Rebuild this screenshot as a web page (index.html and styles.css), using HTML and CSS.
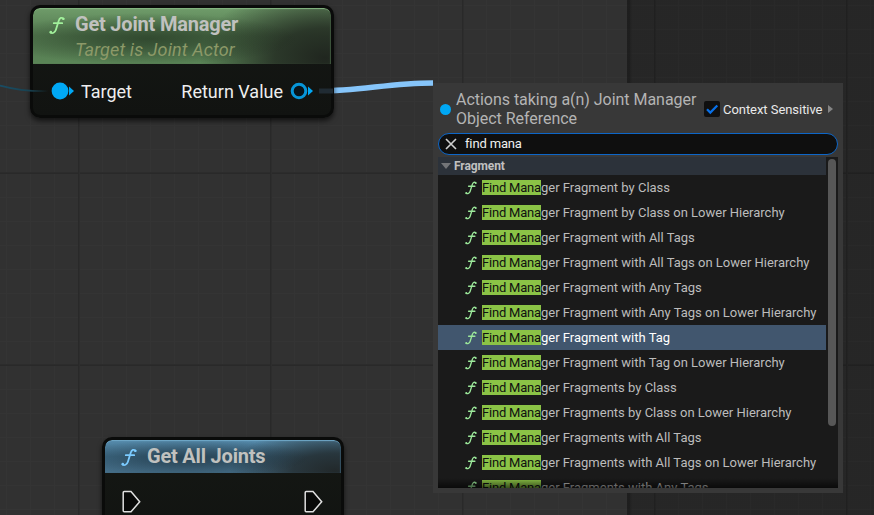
FILE: index.html
```html
<!DOCTYPE html>
<html lang="en">
<head>
<meta charset="utf-8">
<title>Blueprint Graph</title>
<link rel="stylesheet" href="styles.css">
</head>
<body>
<svg class="defs" width="0" height="0" aria-hidden="true">
  <symbol id="fn" viewBox="0 0 16 18">
    <path d="M14.6 2.200C12.800.5 10.700 1.200 9.700 4.300L6.900 13.300C6 16.300 3.300 17.300 1.400 16M4.800 6.700H13.200" fill="none" stroke="currentColor" stroke-width="1.800" stroke-linecap="round"/>
    <circle cx="14.3" cy="2.4" r="1.2" fill="currentColor"/><circle cx="1.8" cy="15.6" r="1.3" fill="currentColor"/>
  </symbol>
  <symbol id="exec" viewBox="0 0 20 23">
    <path d="M2.2 1.5H9L17.7 11.7 9 21.800H2.2Q1.2 21.800 1.2 20.800V2.5Q1.2 1.5 2.2 1.5Z" fill="#080908" stroke="#e0e0e0" stroke-width="1.5"/>
  </symbol>
</svg>
<main class="graph">
  <div class="outside"></div>
  <svg class="wires" width="874" height="515">
    <defs><linearGradient id="fade" gradientUnits="userSpaceOnUse" x1="0" y1="0" x2="48" y2="0"><stop offset="0" stop-color="#184d65"/><stop offset=".6" stop-color="#184353"/><stop offset="1" stop-color="#184353" stop-opacity="0"/></linearGradient></defs>
    <path d="M319 91C360 91 390 83 433 83" fill="none" stroke="#86c5fa" stroke-width="5.500"/>
  </svg>

  <section class="node manager">
    <header class="head green">
      <svg class="fn"><use href="#fn"/></svg>
      <div><h2 class="title">Get Joint Manager</h2><p class="sub">Target is Joint Actor</p></div>
    </header>
    <div class="pins">
      <div class="pin"><svg width="24" height="18" viewBox="0 0 24 18"><circle cx="10" cy="9" r="8.4" fill="#00a8f5"/><path d="M19 4.500L24 9 19 13.500Z" fill="#00a8f5"/></svg><span>Target</span></div>
      <div class="pin"><span>Return Value</span><svg width="24" height="18" viewBox="0 0 24 18"><circle cx="9" cy="9" r="6.8" fill="#08141b" stroke="#0795d8" stroke-width="3"/><path d="M18 4.500L23 9 18 13.500Z" fill="#00a8f5"/></svg></div>
    </div>
  </section>

  <section class="node joints">
    <header class="head blue"><svg class="fn"><use href="#fn"/></svg><h2 class="title">Get All Joints</h2></header>
    <div class="execs"><svg width="20" height="23"><use href="#exec"/></svg><svg width="20" height="23"><use href="#exec"/></svg></div>
  </section>
  <svg class="wires" width="874" height="515">
    <path d="M0 85.5Q22 91.500 48 91" fill="none" stroke="url(#fade)" stroke-width="1.8"/>
    <path d="M319 91H333" stroke="#202b33" stroke-width="5"/>
  </svg>

  <section class="menu">
    <header class="menu-head">
      <i class="dot"></i>
      <h3 class="context">Actions taking a(n) Joint Manager<br>Object Reference</h3>
      <div class="check"><svg width="16" height="16" viewBox="0 0 16 16"><path d="M3 8.200L6.300 11.500 13.300 4.500" fill="none" stroke="#0870e8" stroke-width="2.300"/></svg></div>
      <span class="sensitive">Context Sensitive</span><i class="more"></i>
    </header>
    <div class="search"><svg width="12" height="12" viewBox="0 0 12 12"><path d="M1 1L11 11M11 1L1 11" stroke="#d0d0d0" stroke-width="1.600"/></svg><span>find mana</span></div>
    <div class="list">
      <div class="group"><i></i><span>Fragment</span></div>
      <div class="row"><svg><use href="#fn"/></svg><span><mark>Find Mana</mark>ger Fragment by Class</span></div>
      <div class="row"><svg><use href="#fn"/></svg><span><mark>Find Mana</mark>ger Fragment by Class on Lower Hierarchy</span></div>
      <div class="row"><svg><use href="#fn"/></svg><span><mark>Find Mana</mark>ger Fragment with All Tags</span></div>
      <div class="row"><svg><use href="#fn"/></svg><span><mark>Find Mana</mark>ger Fragment with All Tags on Lower Hierarchy</span></div>
      <div class="row"><svg><use href="#fn"/></svg><span><mark>Find Mana</mark>ger Fragment with Any Tags</span></div>
      <div class="row"><svg><use href="#fn"/></svg><span><mark>Find Mana</mark>ger Fragment with Any Tags on Lower Hierarchy</span></div>
      <div class="row selected"><svg><use href="#fn"/></svg><span><mark>Find Mana</mark>ger Fragment with Tag</span></div>
      <div class="row"><svg><use href="#fn"/></svg><span><mark>Find Mana</mark>ger Fragment with Tag on Lower Hierarchy</span></div>
      <div class="row"><svg><use href="#fn"/></svg><span><mark>Find Mana</mark>ger Fragments by Class</span></div>
      <div class="row"><svg><use href="#fn"/></svg><span><mark>Find Mana</mark>ger Fragments by Class on Lower Hierarchy</span></div>
      <div class="row"><svg><use href="#fn"/></svg><span><mark>Find Mana</mark>ger Fragments with All Tags</span></div>
      <div class="row"><svg><use href="#fn"/></svg><span><mark>Find Mana</mark>ger Fragments with All Tags on Lower Hierarchy</span></div>
      <div class="row"><svg><use href="#fn"/></svg><span><mark>Find Mana</mark>ger Fragments with Any Tags</span></div>
      <div class="thumb"></div>
      <div class="shade"></div>
    </div>
  </section>
</main>
</body>
</html>
```
FILE: styles.css
```css
* { box-sizing: border-box; }
body { margin: 0; font-family: Roboto, "Liberation Sans", sans-serif; overflow: hidden; }
h2, h3, p { margin: 0; }
.defs { position: absolute; }
.graph {
  position: relative; width: 874px; height: 515px; overflow: hidden;
  background:
    repeating-linear-gradient(90deg, #292929 0 1px, #2d2d2d 1px 2px, transparent 2px 192px) 78px 0 / 192px 100%,
    repeating-linear-gradient(#2c2c2c 0 1px, #292929 1px 2px, transparent 2px 192px) 0 172px / 100% 192px,
    linear-gradient(90deg, #343434 1px, transparent 1px) 6px 0 / 24px 24px,
    linear-gradient(#343434 1px, transparent 1px) 0 5px / 24px 24px,
    #313131;
}
.outside { position: absolute; left: 627px; top: 0; width: 247px; height: 515px; background: linear-gradient(90deg, rgba(0,0,0,.38) 0 3px, rgba(0,0,0,.22) 5px); }
.wires { position: absolute; left: 0; top: 0; }

.node { position: absolute; border: 3px solid #0a0b0a; border-radius: 10px; background: linear-gradient(#151814, #111311); box-shadow: 0 3px 5px rgba(0,0,0,.6); overflow: hidden; }
.manager { left: 30px; top: 5px; width: 304px; height: 113px; }
.joints { left: 102px; top: 437px; width: 242px; height: 110px; }
.head { display: flex; border-radius: 7px 7px 0 0; }
.green {
  height: 56px; padding: 4px 0 0 16px; gap: 10px; color: #a1f09b;
  background: radial-gradient(ellipse 150px 26px at 115px 31px, rgba(22,34,22,.55), rgba(22,34,22,.4) 35%, transparent), radial-gradient(ellipse 125px 75px at 292px 50px, #20261f, rgba(32,38,31,.8) 40%, transparent), linear-gradient(#6f9c6a, #52784e 50%, #5b8557);
  box-shadow: inset 0 2px 1px -1px #87b783, inset -1px 0 1px #3f573d;
}
.blue {
  height: 33px; padding: 4px 0 0 16px; gap: 10px; color: #7bcbff;
  background: radial-gradient(ellipse 120px 19px at 85px 18px, rgba(18,28,36,.5), rgba(18,28,36,.35) 40%, transparent), radial-gradient(ellipse 105px 45px at 230px 31px, #22292b, rgba(34,41,43,.8) 40%, transparent), linear-gradient(#568bac, #3f6c87 50%, #466f89);
  box-shadow: inset 0 2px 1px -1px #71a9c9, inset -1px 0 1px #365364;
}
.fn { width: 16px; height: 19px; margin-top: 4px; flex: none; }
.title { color: #c0c1bf; font-size: 20px; line-height: 24px; font-weight: 700; letter-spacing: -.2px; white-space: nowrap; }
.sub { color: #8c9968; font-size: 18px; line-height: 25px; font-style: italic; letter-spacing: .13px; white-space: nowrap; margin-top: 1px; }
.pins { display: flex; justify-content: space-between; padding: 15px 17px 0 17px; }
.pin { display: flex; align-items: center; height: 24px; gap: 7px; color: #eee; font-size: 18px; white-space: nowrap; }
.pin svg { flex: none; }
.execs { display: flex; justify-content: space-between; padding: 17px 17px 0 17px; }

.menu { position: absolute; left: 433px; top: 83px; width: 410px; height: 410px; padding: 5px; background: #383838; display: flex; flex-direction: column; }
.menu-head { display: flex; align-items: flex-start; height: 45px; padding: 0 5px 0 2px; flex: none; }
.dot { width: 11px; height: 11px; border-radius: 50%; background: #00a8f5; margin-top: 16px; }
.context { width: 253px; padding: 2px 0 0 5px; font-size: 16px; font-weight: 400; line-height: 19px; letter-spacing: -.03px; color: #b4b4b4; white-space: nowrap; }
.check { width: 16px; height: 16px; border-radius: 2px; background: #0f0f0f; margin-top: 13px; }
.check svg { display: block; }
.sensitive { color: #e9e9e9; font-size: 13px; line-height: 16px; letter-spacing: -.05px; white-space: nowrap; margin: 14px 0 0 3px; }
.more { border-left: 5px solid #858585; border-top: 4px solid transparent; border-bottom: 4px solid transparent; margin: 17px 0 0 auto; }
.search { height: 22px; border: 1px solid #0d66c8; border-radius: 11px; background: #0f0f0f; display: flex; align-items: center; gap: 8px; padding-left: 6px; color: #f0f0f0; font-size: 13px; letter-spacing: -.15px; flex: none; }
.search span { margin-top: -2px; }
.list { position: relative; flex: none; height: 331px; margin-top: 2px; background: #1a1a1a; overflow: hidden; }
.group { width: 388px; height: 18px; background: #2c323a; color: #c0c0c0; font-size: 12px; font-weight: 700; letter-spacing: -.1px; display: flex; align-items: center; gap: 3px; padding-left: 3px; }
.group i { border-top: 6px solid #737578; border-left: 5px solid transparent; border-right: 5px solid transparent; }
.row { width: 388px; height: 25px; display: flex; align-items: center; gap: 5px; padding-left: 27px; color: #bcbcbc; font-size: 13px; white-space: nowrap; }
.row svg { width: 12px; height: 14px; color: #9be79a; flex: none; margin-top: 1px; }
.row mark { display: inline-block; width: 59px; height: 15px; line-height: 15px; letter-spacing: -.2px; background: #8bc346; color: #101010; }
.selected { background: #41566e; color: #fff; }
.thumb { position: absolute; right: 2px; top: 2px; width: 8px; height: 267px; border-radius: 4px; background: #575757; }
.shade { position: absolute; left: 0; right: 0; bottom: 0; height: 10px; background: linear-gradient(transparent, rgba(0,0,0,.6)); }
```
